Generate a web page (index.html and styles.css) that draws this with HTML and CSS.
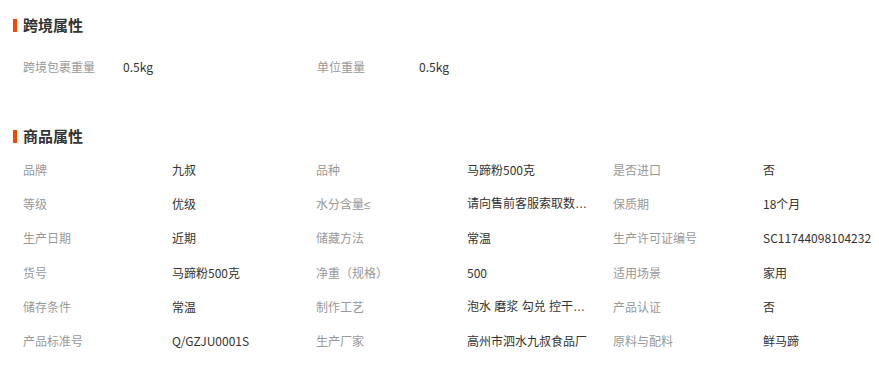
FILE: index.html
```html
<!DOCTYPE html>
<html lang="zh-CN">
<head>
<meta charset="utf-8">
<link rel="stylesheet" href="styles.css">
</head>
<body>
<div class="page">
  <section class="block block-cross">
    <h2 class="title">跨境属性</h2>
    <div class="cross-row">
      <span class="lbl cross-lbl">跨境包裹重量</span><span class="val cross-val">0.5kg</span>
      <span class="lbl cross-lbl cross-lbl-wide">单位重量</span><span class="val cross-val">0.5kg</span>
    </div>
  </section>
  <section class="block block-attr">
    <h2 class="title">商品属性</h2>
    <div class="attr-grid">
      <span class="lbl">品牌</span><span class="val">九叔</span>
      <span class="lbl">品种</span><span class="val">马蹄粉500克</span>
      <span class="lbl">是否进口</span><span class="val">否</span>

      <span class="lbl">等级</span><span class="val">优级</span>
      <span class="lbl">水分含量<span class="latin">≤</span></span><span class="val"><span class="clip">请向售前客服索取数据详情</span></span>
      <span class="lbl">保质期</span><span class="val">18个月</span>

      <span class="lbl">生产日期</span><span class="val">近期</span>
      <span class="lbl">储藏方法</span><span class="val">常温</span>
      <span class="lbl">生产许可证编号</span><span class="val">SC11744098104232</span>

      <span class="lbl">货号</span><span class="val">马蹄粉500克</span>
      <span class="lbl">净重（规格）</span><span class="val">500</span>
      <span class="lbl">适用场景</span><span class="val">家用</span>

      <span class="lbl">储存条件</span><span class="val">常温</span>
      <span class="lbl">制作工艺</span><span class="val"><span class="clip">泡水 磨浆 勾兑 控干 晒干</span></span>
      <span class="lbl">产品认证</span><span class="val">否</span>

      <span class="lbl">产品标准号</span><span class="val">Q/GZJU0001S</span>
      <span class="lbl">生产厂家</span><span class="val">高州市泗水九叔食品厂</span>
      <span class="lbl">原料与配料</span><span class="val">鲜马蹄</span>
    </div>
  </section>
</div>
</body>
</html>
```

FILE: styles.css
```css
html, body {
  margin: 0;
  padding: 0;
  background: #fff;
}

body {
  font-family: "Noto Sans CJK SC", "Microsoft YaHei", sans-serif;
  font-size: 12px;
  color: #333;
}

.page {
  padding: 15px 0 0 13px;
}

.title {
  display: flex;
  align-items: center;
  gap: 6px;
  margin: 0;
  height: 20px;
  font-size: 15px;
  font-weight: bold;
  line-height: 20px;
  color: #333;
}

.title::before {
  content: "";
  display: block;
  width: 4px;
  height: 13px;
  background: #ff4400;
}

.cross-row {
  display: flex;
  align-items: center;
  height: 20px;
  margin-top: 22px;
  padding-left: 10px;
}

.lbl {
  color: #999;
  line-height: 20px;
  white-space: nowrap;
}

.val {
  color: #333;
  line-height: 20px;
  white-space: nowrap;
}

.cross-lbl {
  width: 100px;
}

.cross-lbl-wide {
  width: 102px;
}

.cross-val {
  width: 194px;
}

.block-attr {
  margin-top: 49px;
}

.attr-grid {
  display: grid;
  grid-template-columns: 149px 144px 151px 146px 150px auto;
  grid-auto-rows: 34.2px;
  align-items: center;
  margin-top: 7px;
  padding-left: 10px;
}

.latin {
  font-family: "Liberation Sans", sans-serif;
}

.clip {
  display: block;
  max-width: 121px;
  overflow: hidden;
  text-overflow: ellipsis;
  font-family: "Liberation Sans", "Noto Sans CJK SC", sans-serif;
}
```
